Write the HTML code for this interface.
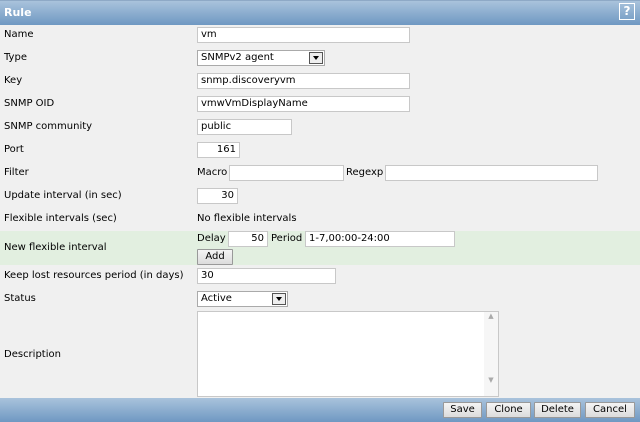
<!DOCTYPE html><html><head><style>
body{margin:0;width:640px;height:422px;background:#f0f0f0;font-family:"DejaVu Sans","Liberation Sans",sans-serif;font-size:10px;color:#000;position:relative;overflow:hidden}
.a{position:absolute;white-space:nowrap}
.i{position:absolute;background:#fff;border:1px solid #c8c8c8;box-sizing:border-box;height:16px;line-height:14px;padding:0 3px;font-size:10px}
.s{position:absolute;background:#fff;border:1px solid #aaa;box-sizing:border-box;height:16px;line-height:14px;padding:0 3px}
.s b{position:absolute;right:1px;top:1px;width:14px;height:12px;border:1px solid #555;background:#eee;box-sizing:border-box}
.s b:after{content:"";position:absolute;left:3px;top:3px;border:3px solid transparent;border-top:4px solid #000}
.btn{position:absolute;background:linear-gradient(#f4f4f4,#dcdcdc);border:1px solid #999;box-sizing:border-box;height:16px;line-height:14px;text-align:center;border-radius:1px}
</style></head><body>
<div class="a" style="left:0;top:0;width:640px;height:24px;background:linear-gradient(#a9c3dc,#6f98c2);border-top:1px solid #8ea9c6"></div>
<div class="a" style="left:4px;top:6px;color:#fff;font-weight:bold;font-size:11px">Rule</div>
<div class="a" style="left:619px;top:3px;width:16px;height:17px;border:1px solid #fff;box-sizing:border-box;color:#fff;font-weight:bold;text-align:center;line-height:15px;font-size:12px">?</div>
<div class="a" style="left:0;top:231px;width:640px;height:34px;background:#e2efe0"></div>
<div class="a" style="left:4px;top:29px">Name</div>
<div class="a" style="left:4px;top:52px">Type</div>
<div class="a" style="left:4px;top:75px">Key</div>
<div class="a" style="left:4px;top:98px">SNMP OID</div>
<div class="a" style="left:4px;top:121px">SNMP community</div>
<div class="a" style="left:4px;top:144px">Port</div>
<div class="a" style="left:4px;top:167px">Filter</div>
<div class="a" style="left:4px;top:190px">Update interval (in sec)</div>
<div class="a" style="left:4px;top:213px">Flexible intervals (sec)</div>
<div class="a" style="left:4px;top:242px">New flexible interval</div>
<div class="a" style="left:4px;top:270px">Keep lost resources period (in days)</div>
<div class="a" style="left:4px;top:293px">Status</div>
<div class="a" style="left:4px;top:349px">Description</div>
<div class="i" style="left:197px;top:27px;width:213px">vm</div>
<div class="s" style="left:197px;top:50px;width:128px">SNMPv2 agent<b></b></div>
<div class="i" style="left:197px;top:73px;width:213px">snmp.discoveryvm</div>
<div class="i" style="left:197px;top:96px;width:213px">vmwVmDisplayName</div>
<div class="i" style="left:197px;top:119px;width:95px">public</div>
<div class="i" style="left:197px;top:142px;width:43px;text-align:right">161</div>
<div class="a" style="left:197px;top:167px">Macro</div>
<div class="i" style="left:229px;top:165px;width:115px"></div>
<div class="a" style="left:346px;top:167px">Regexp</div>
<div class="i" style="left:385px;top:165px;width:213px"></div>
<div class="i" style="left:197px;top:188px;width:41px;text-align:right">30</div>
<div class="a" style="left:197px;top:213px">No flexible intervals</div>
<div class="a" style="left:197px;top:233px">Delay</div>
<div class="i" style="left:228px;top:231px;width:40px;text-align:right">50</div>
<div class="a" style="left:271px;top:233px">Period</div>
<div class="i" style="left:305px;top:231px;width:150px">1-7,00:00-24:00</div>
<div class="btn" style="left:197px;top:249px;width:36px">Add</div>
<div class="i" style="left:197px;top:268px;width:139px">30</div>
<div class="s" style="left:197px;top:291px;width:91px">Active<b></b></div>
<div class="a" style="left:197px;top:311px;width:302px;height:86px;background:#fff;border:1px solid #c8c8c8;box-sizing:border-box"><div class="a" style="right:0;top:0;width:14px;height:84px;background:#f6f6f6;color:#aaa;font-size:7px;text-align:center">▲<br><br><br><br><br><br><br><br>▼</div></div>
<div class="a" style="left:0;top:398px;width:640px;height:24px;background:linear-gradient(#a9c3dc,#6f98c2)"></div>
<div class="btn" style="left:443px;top:402px;width:39px">Save</div>
<div class="btn" style="left:486px;top:402px;width:45px">Clone</div>
<div class="btn" style="left:534px;top:402px;width:47px">Delete</div>
<div class="btn" style="left:585px;top:402px;width:50px">Cancel</div>
</body></html>
